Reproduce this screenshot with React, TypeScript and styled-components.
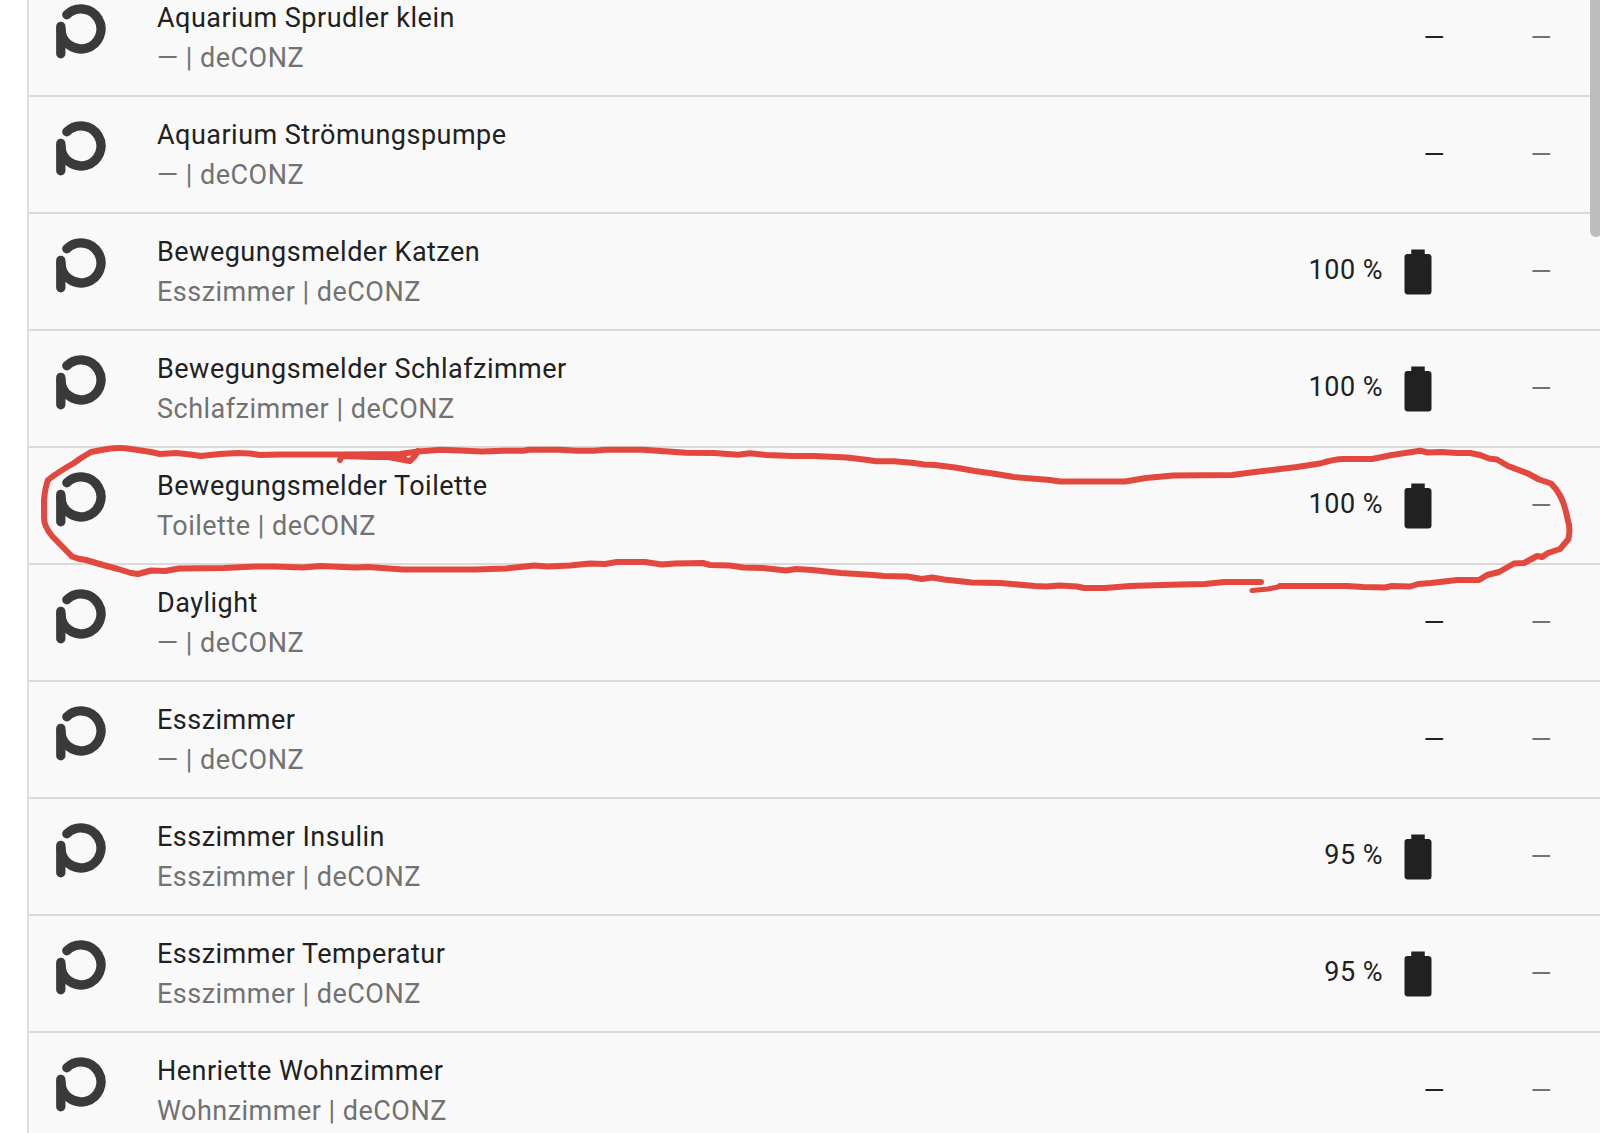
import React from "react";
import styled, { createGlobalStyle } from "styled-components";

const GlobalStyle = createGlobalStyle`
  body {
    margin: 0;
    background: #ffffff;
    overflow: hidden;
    font-family: Roboto, "Noto Sans", sans-serif;
  }
`;

const Page = styled.main`
  position: relative;
  box-sizing: border-box;
  height: 100vh;
  padding-left: 27px;
  overflow: hidden;
`;

const Panel = styled.section`
  min-height: 100%;
  background: #f9f9f9;
  border-left: 2px solid #dedede;
`;

const DeviceTable = styled.table`
  width: 100%;
  margin-top: -22px;
  border-spacing: 0;
  border-collapse: separate;
  font-size: 27px;
  line-height: 40px;
  letter-spacing: 0.0178571429em;
  color: #212121;
`;

const Row = styled.tr`
  height: 117px;
`;

const Cell = styled.td`
  padding: 0;
  border-top: 2px solid #dadada;
  vertical-align: middle;
`;

const IconCell = styled(Cell)`
  width: 101px;
  padding: 0 0 12px 27px;
`;

const BatteryCell = styled(Cell)`
  width: 200px;
  padding-right: 36px;
  text-align: right;
`;

const LastCell = styled(Cell)`
  width: 71px;
  padding-right: 48px;
  text-align: right;
  color: #727272;
`;

const Secondary = styled.div`
  color: #727272;
`;

const Level = styled.div`
  display: flex;
  align-items: center;
  justify-content: flex-end;
  gap: 8px;
`;

const LevelText = styled.span`
  padding-bottom: 4px;
`;

const Glyph = styled.svg`
  display: block;
  flex: none;
`;

const ScrollThumb = styled.div`
  position: absolute;
  top: 0;
  right: -2px;
  width: 12px;
  height: 237px;
  border-radius: 0 0 6px 6px;
  background: #bdbdbd;
`;

const Markup = styled.svg`
  position: absolute;
  top: 0;
  left: 0;
  pointer-events: none;
`;

function DeconzLogo() {
  return (
    <Glyph width="50" height="55" viewBox="0 0 50 55" fill="none" stroke="#3a3a3a" strokeWidth="9.3" strokeLinecap="round" aria-hidden="true">
      <path d="M10.8 10.8A20 20 0 1 1 5 25" />
      <path d="M4.8 22.4V49.8" />
    </Glyph>
  );
}

function BatteryIcon() {
  return (
    <Glyph width="54" height="54" viewBox="0 0 24 24" fill="#212121" aria-hidden="true">
      <path d="M16.67 4H15V2H9V4H7.33A1.33 1.33 0 0 0 6 5.33V20.67C6 21.4 6.6 22 7.33 22H16.67A1.33 1.33 0 0 0 18 20.67V5.33C18 4.6 17.4 4 16.67 4Z" />
    </Glyph>
  );
}

interface Device {
  name: string;
  area: string;
  battery?: number;
}

const devices: Device[] = [
  { name: "Aquarium Sprudler klein", area: "—" },
  { name: "Aquarium Strömungspumpe", area: "—" },
  { name: "Bewegungsmelder Katzen", area: "Esszimmer", battery: 100 },
  { name: "Bewegungsmelder Schlafzimmer", area: "Schlafzimmer", battery: 100 },
  { name: "Bewegungsmelder Toilette", area: "Toilette", battery: 100 },
  { name: "Daylight", area: "—" },
  { name: "Esszimmer", area: "—" },
  { name: "Esszimmer Insulin", area: "Esszimmer", battery: 95 },
  { name: "Esszimmer Temperatur", area: "Esszimmer", battery: 95 },
  { name: "Henriette Wohnzimmer", area: "Wohnzimmer" },
];

function DeviceRow({ name, area, battery }: Device) {
  return (
    <Row>
      <IconCell>
        <DeconzLogo />
      </IconCell>
      <Cell>
        <div>{name}</div>
        <Secondary>{area} | deCONZ</Secondary>
      </Cell>
      <BatteryCell>
        {battery === undefined ? (
          "—"
        ) : (
          <Level>
            <LevelText>{battery} %</LevelText>
            <BatteryIcon />
          </Level>
        )}
      </BatteryCell>
      <LastCell>—</LastCell>
    </Row>
  );
}

const outline =
  "M340 460L342 456L372 457L388 457L410 461L414 457L418 451M344 455L372 457L404 456" +
  "M1261 582L1224 582L1205 584L1180 584.5L1130 586L1105 588L1084 588L1077 586.5L1060 585.5L1046 586.5L1035 586L1000 583L972 582.5L944 579.5L932 577.5L922 579L907 576.5L884 576L873 575L841 573L812 570L796 569L786 570.5L763 568L743 567.5L730 565.5L710 565L703 563L675 563.5L662 564.5L645 562L617 562L605 564L590 563.5L570 565.5L548 566.5L534 565.5L506 568.5L475 569.5L403 569.5L368 567L355 567.5L320 566L303 567.5L275 566.5L255 566.5L224 568L179 568.5L165 571L151 570.5L138 574L131 573L118 569L103 565L86 560Q78 559 72 556.5L52 536Q44 526 44 518L44 500Q45 488 48 480Q58 472 74 463L81 458L91 452L107 449Q120 447 131 449L151 452L160 454L176 453L190 454.5L201 456L220 454L238 453L250 453.5L260 455L280 454.5L303 454.5L344 454.5L400 454L418 451.5L441 449.7L460 450.5L482 451.5L503 450.7L523 450.7L529 449.7L560 449.7L577 450.7L594 450.7L605 449.7L643 449.7L686 452.7L714 453L738 454.7L750 453.3L766 455L793 456L814 456L847 457.5L868 460L876 461.3L894 461.3L914 463L924 464.5L935 465L955 467.5L975 471L993 473.5L1014 477L1050 480L1060 481.5L1125 481.5L1146 478L1173 475.5L1232 475L1255 472L1297 467L1320 463.5Q1335 459 1343 459L1372 459L1392 455L1420 450.7L1428 452.5L1441 452L1457 453L1470 453L1480 455L1489 458.5L1497 459.5L1508 466L1528 473.5L1539 479.5L1551 483.5Q1562 494 1566 512L1569 525L1569.5 531L1568.5 539L1560 549L1548 553L1542 557L1537 556L1524 563L1514 563.5L1499 572L1487 575L1479 580L1457 580L1431 583L1418 584L1410 586.5L1392 586L1385 587.5L1363 587L1347 586L1280 586";

export default function App() {
  return (
    <>
      <GlobalStyle />
      <Page>
        <Panel>
          <DeviceTable>
            <tbody>
              {devices.map((device) => (
                <DeviceRow key={device.name} {...device} />
              ))}
            </tbody>
          </DeviceTable>
        </Panel>
        <ScrollThumb />
        <Markup width="1600" height="640" viewBox="0 0 1600 640" fill="none" stroke="#e2483d" strokeLinecap="round" strokeLinejoin="round" aria-hidden="true">
          <path d={outline} strokeWidth="6" />
          <path d="M1280 586.5L1268 589L1252 590.5" strokeWidth="5" />
        </Markup>
      </Page>
    </>
  );
}
